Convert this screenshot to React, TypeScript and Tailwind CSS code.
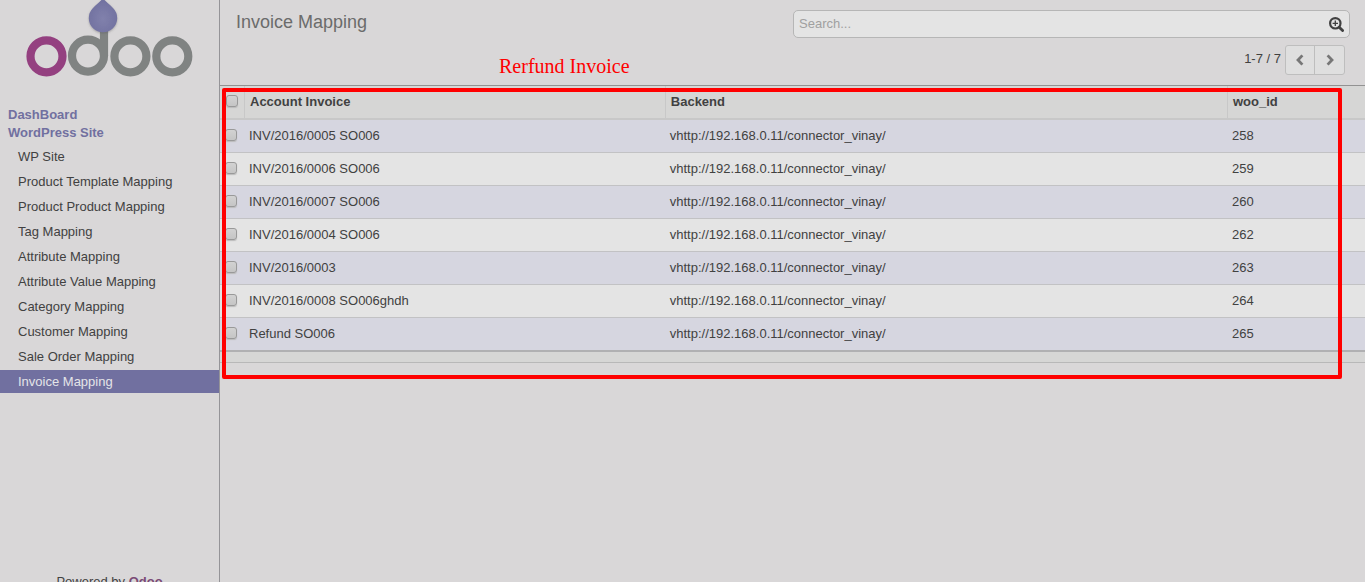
const menu = [
  "WP Site",
  "Product Template Mapping",
  "Product Product Mapping",
  "Tag Mapping",
  "Attribute Mapping",
  "Attribute Value Mapping",
  "Category Mapping",
  "Customer Mapping",
  "Sale Order Mapping",
  "Invoice Mapping",
];

const invoices = [
  { name: "INV/2016/0005 SO006", id: 258 },
  { name: "INV/2016/0006 SO006", id: 259 },
  { name: "INV/2016/0007 SO006", id: 260 },
  { name: "INV/2016/0004 SO006", id: 262 },
  { name: "INV/2016/0003", id: 263 },
  { name: "INV/2016/0008 SO006ghdh", id: 264 },
  { name: "Refund SO006", id: 265 },
];

function Logo() {
  return (
    <svg viewBox="0 0 219 84" className="block h-[84px] w-[219px]" role="img" aria-label="odoo">
      <defs>
        <radialGradient id="drop" cx="50%" cy="60%" r="55%">
          <stop offset="0" stopColor="#8181ac" />
          <stop offset="1" stopColor="#7171a0" />
        </radialGradient>
        <filter id="shade" x="-20%" y="-20%" width="140%" height="150%">
          <feDropShadow dx="0" dy="1" stdDeviation="1" floodColor="#555" floodOpacity="0.4" />
        </filter>
      </defs>
      <g fill="none" strokeWidth="8.2">
        <circle cx="46.5" cy="56.3" r="16" stroke="#944080" />
        <circle cx="88" cy="55.6" r="16" stroke="#808382" />
        <path d="M104 28V56" stroke="#808382" />
        <circle cx="130.4" cy="56.3" r="16" stroke="#808382" />
        <circle cx="172.3" cy="56.3" r="16" stroke="#808382" />
      </g>
      <path
        d="M103 -2C105 1.5 110 4.5 113.2 8.2A14.2 14.2 0 1 1 92.8 8.2C96 4.5 101 1.5 103 -2Z"
        fill="url(#drop)"
        filter="url(#shade)"
      />
    </svg>
  );
}

function Chevron({ d }: { d: string }) {
  return (
    <svg viewBox="0 0 8 12" className="h-3 w-2" fill="none" stroke="currentColor" strokeWidth="2.8">
      <path d={d} />
    </svg>
  );
}

function Check({ label }: { label: string }) {
  return (
    <input
      type="checkbox"
      aria-label={label}
      className="block size-3 appearance-none rounded-[3px] border border-[#999999] bg-linear-to-b from-[#d2d2d2] to-[#c5c5c5] shadow-[0_1px_1px_#bbbbbb] checked:bg-[#7171a0]"
    />
  );
}

export default function App() {
  return (
    <div className="flex h-screen overflow-hidden bg-[#d9d7d8] font-['Liberation_Sans',Arial,sans-serif] text-[13px] leading-[18px] text-[#414141]">
      <aside className="flex w-[220px] shrink-0 flex-col border-r border-[#959498]">
        <Logo />
        <nav className="mt-[22px] font-bold text-[#7170a0]">
          <a href="#dashboard" className="block px-2">DashBoard</a>
          <a href="#wordpress" className="block px-2">WordPress Site</a>
          <ul className="mt-[3px] flex flex-col gap-0.5 font-normal text-[#414141]">
            {menu.map((item) => (
              <li key={item}>
                <a
                  href="#mapping"
                  className={
                    item === "Invoice Mapping"
                      ? "block bg-[#7170a0] pt-[3px] pr-2 pb-0.5 pl-[18px] text-[#e4e4e8]"
                      : "block pt-[3px] pr-2 pb-0.5 pl-[18px]"
                  }
                >
                  {item}
                </a>
              </li>
            ))}
          </ul>
        </nav>
        <footer className="mt-auto -mb-[9px] text-center">
          Powered by <a href="#odoo" className="font-bold text-[#7b4b75]">Odoo</a>
        </footer>
      </aside>

      <main className="min-w-0 flex-1">
        <header className="flex h-[86px] justify-between border-b border-[#929292] pr-[15px] pl-4">
          <div className="flex flex-1 flex-col">
            <h1 className="mt-2.5 text-lg leading-6 text-[#6b6b6b]">Invoice Mapping</h1>
            <p className="mt-5 pl-[263px] font-['Liberation_Serif',serif] text-xl leading-6 text-[#ff0000]">
              Rerfund Invoice
            </p>
          </div>
          <div className="w-1/2 pt-2.5">
            <div className="flex h-7 items-center rounded-[5px] border border-[#b6b6b6] bg-[#e4e4e4] px-[5px]">
              <input
                type="text"
                aria-label="Search"
                placeholder="Search..."
                className="min-w-0 flex-1 bg-transparent outline-none placeholder:text-[#a0a0a0]"
              />
              <button type="button" aria-label="Advanced search">
                <svg viewBox="0 0 15 15" className="size-[15px]" fill="none" stroke="#414141">
                  <circle cx="6.3" cy="6.3" r="5.2" strokeWidth="2.2" />
                  <path d="M10.2 10.2L13.6 13.6" strokeWidth="2.8" strokeLinecap="round" />
                  <path d="M6.3 3.6V9M3.6 6.3H9" strokeWidth="1.3" />
                </svg>
              </button>
            </div>
            <div className="mt-[7px] flex justify-end gap-1 pr-[5px]">
              <span className="mt-[5px]">1-7 / 7</span>
              <div className="flex h-[30px] w-[60px] rounded-[3px] border border-[#bebebe] bg-[#dfdfdf] text-[#777777]">
                <button type="button" aria-label="Previous" className="flex w-[29px] items-center justify-center border-r border-[#bebebe]">
                  <Chevron d="M6.4 1.4L2 6L6.4 10.6" />
                </button>
                <button type="button" aria-label="Next" className="flex flex-1 items-center justify-center">
                  <Chevron d="M1.6 1.4L6 6L1.6 10.6" />
                </button>
              </div>
            </div>
          </div>
        </header>

        <section className="relative">
          <table className="w-full table-fixed border-separate border-spacing-0 text-left">
            <colgroup>
              <col className="w-[25px]" />
              <col className="w-[36.75%]" />
              <col className="w-[49.1%]" />
              <col />
            </colgroup>
            <thead className="bg-[#d6d6d5]">
              <tr className="h-[34px] align-top">
                <th className="border-r border-b-2 border-[#c8c8c8] pt-[9px] pl-1.5"><Check label="Select all" /></th>
                <th className="border-r border-b-2 border-[#c8c8c8] pt-[7px] pl-[5px]">Account Invoice</th>
                <th className="border-r border-b-2 border-[#c8c8c8] pt-[7px] pl-[5px]">Backend</th>
                <th className="border-b-2 border-[#c8c8c8] pt-[7px] pl-[5px]">woo_id</th>
              </tr>
            </thead>
            <tbody className="align-top [&_td]:border-b [&_td]:border-[#c2c2c4] [&_tr:last-child_td]:border-b-2 [&_tr:last-child_td]:border-[#b0b0b2]">
              {invoices.map((row) => (
                <tr key={row.id} className="h-[33px] last:h-[34px] odd:bg-[#d6d6e0] even:bg-[#e4e4e4]">
                  <td className="pt-[9px] pl-[5px]"><Check label={row.name} /></td>
                  <td className="pt-[7px] pl-1">{row.name}</td>
                  <td className="pt-[7px] pl-1">vhttp://192.168.0.11/connector_vinay/</td>
                  <td className="pt-[7px] pl-1">{row.id}</td>
                </tr>
              ))}
            </tbody>
            <tfoot className="bg-[#d6d6d5]">
              <tr>
                <td colSpan={4} className="h-[11px] border-b border-[#b8b8b8]" />
              </tr>
            </tfoot>
          </table>
          <div className="pointer-events-none absolute top-0.5 right-[23px] -bottom-4 left-0.5 rounded-xs border-4 border-[#ff0000]" />
        </section>
      </main>
    </div>
  );
}
